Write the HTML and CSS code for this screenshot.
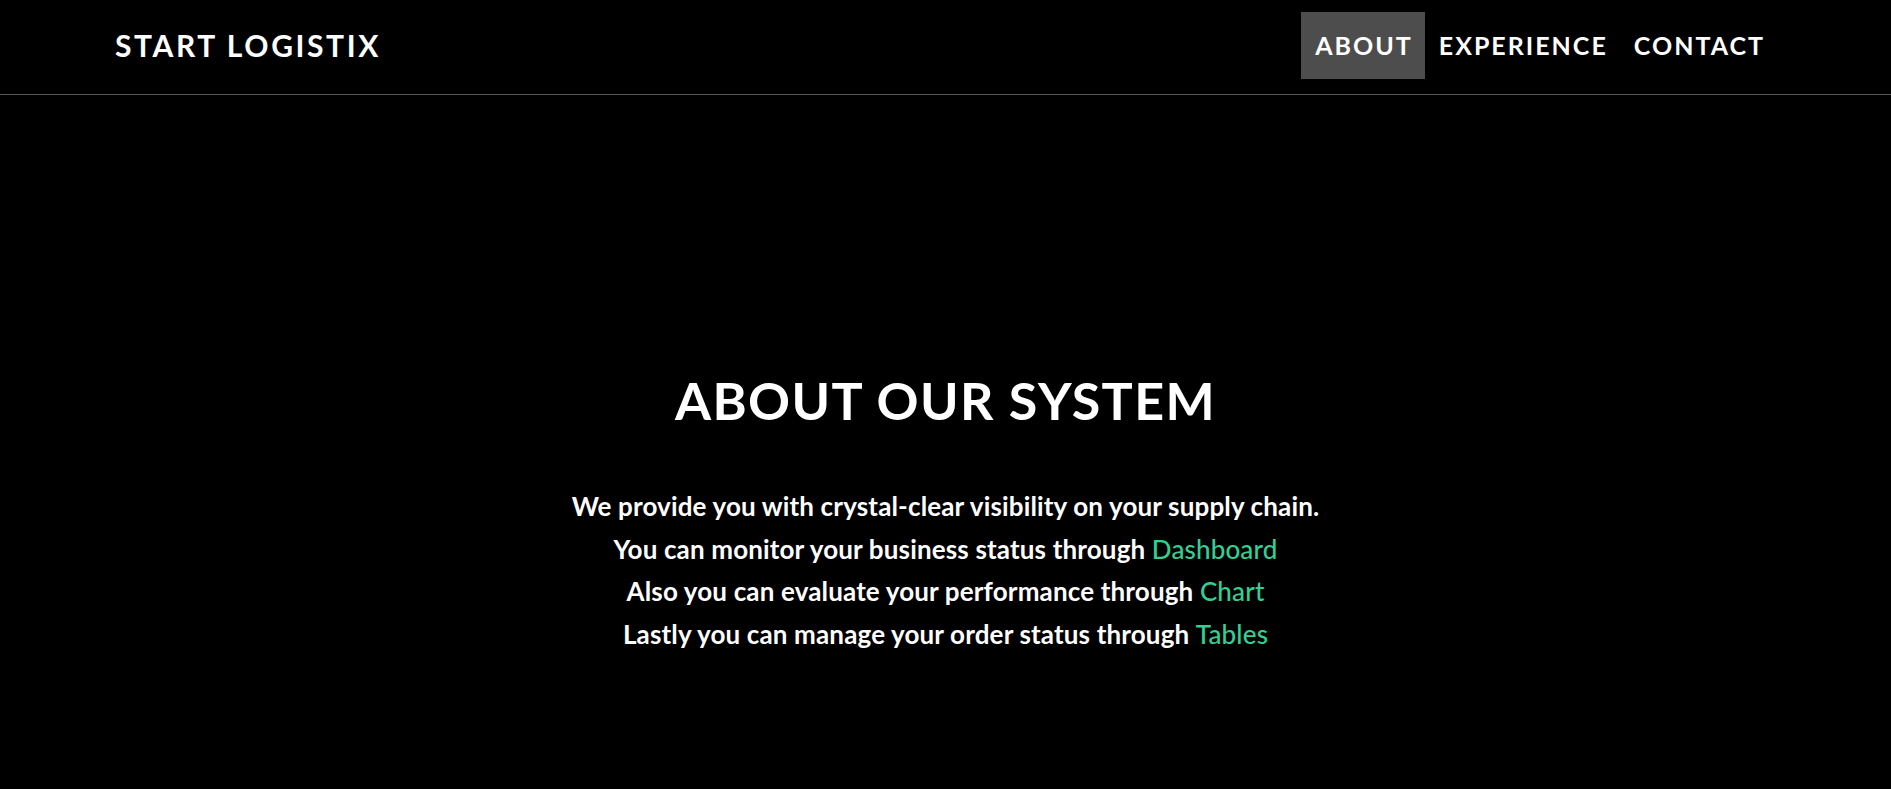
FILE: index.html
```html
<!DOCTYPE html>
<html lang="en">
<head>
<meta charset="utf-8">
<title>Start Logistix</title>
<link rel="stylesheet" href="styles.css">
</head>
<body>
<header class="topbar">
  <a class="brand" href="#">START LOGISTIX</a>
  <nav class="nav">
    <a class="nav-link active" href="#">ABOUT</a>
    <a class="nav-link" href="#">EXPERIENCE</a>
    <a class="nav-link" href="#">CONTACT</a>
  </nav>
</header>
<main class="about">
  <h1 class="about-title">ABOUT OUR SYSTEM</h1>
  <p class="about-text">
    We provide you with crystal-clear visibility on your supply chain.<br>
    You can monitor your business status through <a class="hl" href="#">Dashboard</a><br>
    Also you can evaluate your performance through <a class="hl" href="#">Chart</a><br>
    Lastly you can manage your order status through <a class="hl" href="#">Tables</a>
  </p>
</main>
</body>
</html>
```
FILE: styles.css
```css
* { box-sizing: border-box; }
html, body { height: 100%; }
body {
  margin: 0;
  background: #000;
  color: #fff;
  font-family: Lato, "Liberation Sans", sans-serif;
}
a { color: inherit; text-decoration: none; }

.topbar {
  display: flex;
  justify-content: space-between;
  align-items: center;
  height: 95px;
  padding: 0 114px 4px 115px;
  border-bottom: 1px solid #555;
}
.brand {
  font-size: 30px;
  font-weight: 700;
  letter-spacing: 2.6px;
}
.nav { display: flex; align-items: center; }
.nav-link {
  display: flex;
  align-items: center;
  height: 67px;
  padding: 0 12px 0 14px;
  font-size: 25px;
  font-weight: 700;
  letter-spacing: 2px;
}
.nav-link.active { background: #4d4d4d; }

.about {
  text-align: center;
  padding-top: 274px;
}
.about-title {
  margin: 0;
  font-size: 52px;
  line-height: 62px;
  font-weight: 700;
  letter-spacing: 1.4px;
}
.about-text {
  margin: 54px 0 0;
  font-size: 26px;
  line-height: 42.7px;
  font-weight: 700;
  letter-spacing: 0.15px;
}
.hl { color: #33cf94; font-weight: 500; }
```
